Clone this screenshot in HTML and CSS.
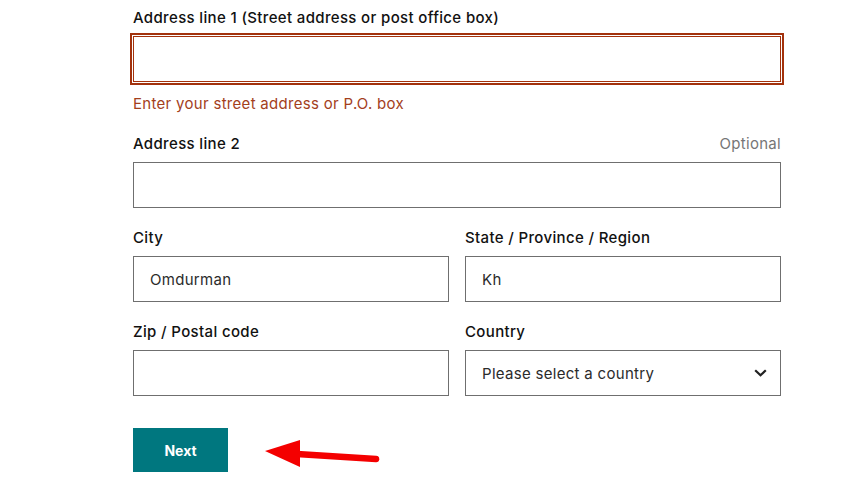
FILE: index.html
```html
<!DOCTYPE html>
<html lang="en">
<head>
<meta charset="utf-8">
<title>Address</title>
<link rel="stylesheet" href="styles.css">
</head>
<body>
<form class="form">
  <div class="field">
    <div class="label-row"><label class="label">Address line 1 (Street address or post office box)</label></div>
    <div class="input input-error"></div>
    <div class="error-text">Enter your street address or P.O. box</div>
  </div>
  <div class="field">
    <div class="label-row"><label class="label">Address line 2</label><span class="optional">Optional</span></div>
    <div class="input"></div>
  </div>
  <div class="grid">
    <div class="field">
      <div class="label-row"><label class="label">City</label></div>
      <div class="input">Omdurman</div>
    </div>
    <div class="field">
      <div class="label-row"><label class="label">State / Province / Region</label></div>
      <div class="input">Kh</div>
    </div>
    <div class="field">
      <div class="label-row"><label class="label">Zip / Postal code</label></div>
      <div class="input"></div>
    </div>
    <div class="field">
      <div class="label-row"><label class="label">Country</label></div>
      <div class="input select">Please select a country
        <svg class="chevron" width="13" height="8" viewBox="0 0 13 8"><path d="M1.2 1.2 L6.5 6.3 L11.8 1.2" fill="none" stroke="#222" stroke-width="2.2"/></svg>
      </div>
    </div>
  </div>
  <div class="actions">
    <button type="button" class="btn">Next</button>
    <svg class="arrow" width="118" height="32" viewBox="0 0 118 32">
      <line x1="34" y1="16" x2="113" y2="21" stroke="#f40000" stroke-width="6.5" stroke-linecap="round"/>
      <polygon points="2,13 37,2 37,29" fill="#f40000"/>
    </svg>
  </div>
</form>
</body>
</html>
```
FILE: styles.css
```css
* { box-sizing: border-box; }
html, body { margin: 0; padding: 0; background: #fff; }
body {
  font-family: Inter, "Liberation Sans", sans-serif;
  font-size: 15px;
  letter-spacing: 0.3px;
  color: #111;
}
.form {
  width: 648px;
  margin-left: 133px;
  padding-top: 6px;
}
.field { display: flex; flex-direction: column; }
.label-row {
  display: flex;
  justify-content: space-between;
  align-items: baseline;
  height: 22px;
  padding-top: 2px;
  line-height: 20px;
  margin-bottom: 8px;
}
.label { font-weight: 500; color: #111; letter-spacing: 0.35px; }
.optional { color: #767676; font-weight: 400; }
.input {
  height: 46px;
  border: 1px solid #6f6f6f;
  padding: 0 16px;
  display: flex;
  align-items: center;
  color: #2b2b2b;
  background: #fff;
}
.input-error {
  border-color: #a3320d;
  outline: 2px solid #a3320d;
  outline-offset: 1px;
}
.error-text {
  color: #a3401c;
  margin-top: 12px;
  line-height: 20px;
  height: 20px;
  margin-bottom: 18px;
}
.field + .grid { margin-top: 18px; }
.grid {
  display: grid;
  grid-template-columns: 1fr 1fr;
  column-gap: 16px;
  row-gap: 18px;
}
.select { justify-content: space-between; }
.chevron { margin-right: -3px; }
.actions {
  display: flex;
  align-items: flex-start;
  margin-top: 32px;
}
.btn {
  width: 95px;
  height: 44px;
  background: #00777f;
  color: #fff;
  border: none;
  font-family: Inter, "Liberation Sans", sans-serif;
  font-weight: 700;
  font-size: 14px;
  letter-spacing: 0;
  padding: 0;
}
.arrow { margin-left: 35px; margin-top: 10px; }
```
